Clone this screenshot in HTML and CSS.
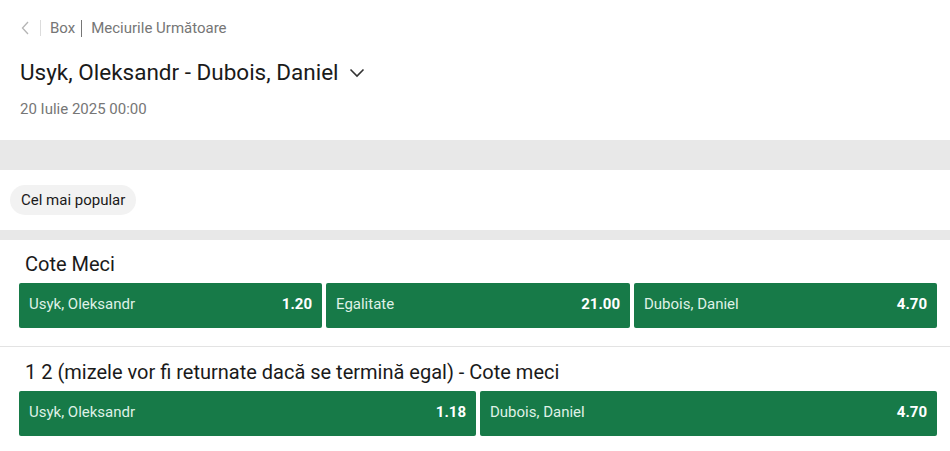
FILE: index.html
```html
<!DOCTYPE html>
<html lang="ro">
<head>
<meta charset="utf-8">
<link rel="stylesheet" href="styles.css">
</head>
<body>
<div class="page">
  <header class="head">
    <nav class="crumbs">
      <span class="back"><svg width="8" height="14" viewBox="0 0 8 14"><path d="M7 1 L1.5 7 L7 13" fill="none" stroke="#b5b5b5" stroke-width="1.3"/></svg></span>
      <span class="sep"></span>
      <span class="crumb">Box</span>
      <span class="sep dark"></span>
      <span class="crumb">Meciurile Următoare</span>
    </nav>
    <h1 class="title">Usyk, Oleksandr - Dubois, Daniel <svg class="caret" width="16" height="10" viewBox="0 0 16 10"><path d="M1.5 1.5 L8 8 L14.5 1.5" fill="none" stroke="#333" stroke-width="1.6"/></svg></h1>
    <div class="date">20 Iulie 2025 00:00</div>
  </header>
  <div class="band"></div>
  <div class="chips"><span class="chip">Cel mai popular</span></div>
  <div class="band thin"></div>
  <section class="market">
    <h2 class="mtitle">Cote Meci</h2>
    <div class="odds three">
      <button class="odd"><span class="lbl">Usyk, Oleksandr</span><span class="val">1.20</span></button>
      <button class="odd"><span class="lbl">Egalitate</span><span class="val">21.00</span></button>
      <button class="odd"><span class="lbl">Dubois, Daniel</span><span class="val">4.70</span></button>
    </div>
  </section>
  <section class="market second">
    <h2 class="mtitle">1 2 (mizele vor fi returnate dacă se termină egal) - Cote meci</h2>
    <div class="odds two">
      <button class="odd"><span class="lbl">Usyk, Oleksandr</span><span class="val">1.18</span></button>
      <button class="odd"><span class="lbl">Dubois, Daniel</span><span class="val">4.70</span></button>
    </div>
  </section>
</div>
</body>
</html>
```
FILE: styles.css
```css
* { box-sizing: border-box; }
html, body { margin: 0; padding: 0; background: #fff; }
body { font-family: Roboto, "Noto Sans", Arial, sans-serif; color: #1a1a1a; }
.page { width: 950px; }
.head { padding: 18px 20px 0 20px; height: 140px; }
.crumbs { display: flex; align-items: center; height: 20px; font-size: 15px; color: #767676; }
.back { display: flex; align-items: center; width: 10px; margin-left: 1px; }
.sep { width: 1px; height: 16px; background: #dcdcdc; margin: 0 9px 0 9px; }
.sep.dark { background: #767676; height: 17px; margin: 0 9px 0 6px; }
.title { margin: 21px 0 0 0; font-size: 22.5px; font-weight: 400; line-height: 26px; color: #1a1a1a; display: flex; align-items: center; }
.caret { margin-left: 10px; margin-top: 2px; }
.date { margin-top: 15px; font-size: 15px; color: #767676; line-height: 18px; }
.band { height: 30px; background: #e8e8e8; }
.band.thin { height: 10px; }
.chips { height: 60px; padding: 15px 10px; display: flex; }
.chip { display: inline-flex; align-items: center; height: 30px; padding: 0 11px; background: #f2f2f2; border-radius: 15px; font-size: 15px; color: #1a1a1a; }
.market { padding: 13px 13px 18px 19px; border-bottom: 1px solid #e3e3e3; }
.market.second { border-bottom: none; padding-top: 14px; }
.mtitle { margin: 0 0 7px 6px; font-size: 20px; font-weight: 400; line-height: 23px; color: #1a1a1a; }
.odds { display: grid; gap: 4px; }
.odds.three { grid-template-columns: 303px 304px 303px; }
.odds.two { grid-template-columns: 457px 457px; }
.odd { height: 45px; border: none; border-radius: 2px; background: #177a48; display: flex; align-items: center; justify-content: space-between; padding: 0 10px 3px 10px; font-family: inherit; cursor: pointer; }
.lbl { font-size: 15px; color: #dff1e6; }
.val { font-size: 15px; font-weight: 700; color: #fff; }
```
